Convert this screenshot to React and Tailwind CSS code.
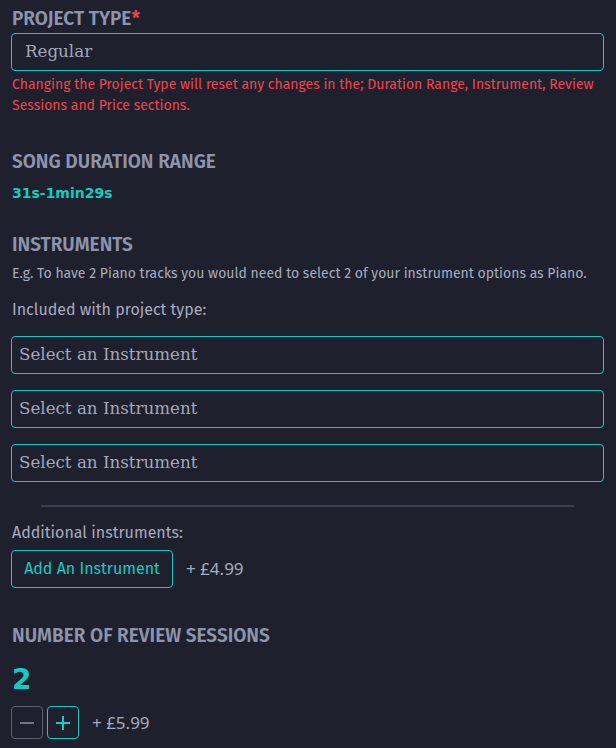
import React from "react";

const sans = "font-['Fira_Sans','Noto_Sans',sans-serif]";
const slab = "font-['DejaVu_Serif','Liberation_Serif',serif]";
const wide = "font-['DejaVu_Sans','Verdana',sans-serif]";
const price = "font-['Noto_Sans',sans-serif]";

function Heading({ children }) {
  return (
    <h2 className={`${sans} text-[19px] font-semibold uppercase leading-[24px] text-[#8e94ac]`}>
      {children}
    </h2>
  );
}

function SelectBox({ label, pad = "pl-[13px]" }) {
  return (
    <div className={`h-[38px] w-full rounded-[4px] border border-[#10c9c9] flex items-center ${pad}`}>
      <span className={`${slab} text-[16.7px] text-[#a2a7bb]`}>{label}</span>
    </div>
  );
}

export default function App() {
  return (
    <div className={`min-h-[748px] w-[616px] bg-[#1e212d] pl-[11px] pr-[12px] pt-[7px] ${sans}`}>
      <div className="pl-[1px]">
        <Heading>
          Project Type<span className="text-[#f0444c]">*</span>
        </Heading>
      </div>
      <div className="mt-[2px]">
        <SelectBox label="Regular" />
      </div>
      <p className="mt-[3px] pl-[1px] text-[14px] leading-[21px] text-[#f0444c]">
        Changing the Project Type will reset any changes in the; Duration Range, Instrument, Review Sessions and Price sections.
      </p>

      <div className="mt-[34px] pl-[1px]">
        <Heading>Song Duration Range</Heading>
      </div>
      <div className={`mt-[10px] pl-[1px] ${wide} text-[14px] font-semibold leading-[18px] text-[#12cbc6]`}>31s-1min29s</div>

      <div className="mt-[31px] pl-[1px]">
        <Heading>Instruments</Heading>
      </div>
      <p className="mt-[8px] pl-[1px] text-[14px] leading-[18px] text-[#a7abbd]">
        E.g. To have 2 Piano tracks you would need to select 2 of your instrument options as Piano.
      </p>
      <p className="mt-[17px] pl-[1px] text-[16px] leading-[20px] text-[#a7abbd]">Included with project type:</p>

      <div className="mt-[16px] flex flex-col gap-[16px]">
        <SelectBox label="Select an Instrument" pad="pl-[7px]" />
        <SelectBox label="Select an Instrument" pad="pl-[7px]" />
        <SelectBox label="Select an Instrument" pad="pl-[7px]" />
      </div>

      <div className="mt-[23px] ml-[30px] mr-[30px] h-[2px] bg-[#3b3f4e]" />

      <p className="mt-[16px] pl-[1px] text-[16px] leading-[20px] text-[#a7abbd]">Additional instruments:</p>
      <div className="mt-[7px] flex items-center gap-[13px]">
        <button className="h-[38px] w-[162px] rounded-[4px] border border-[#10c9c9] text-[16px] text-[#12cbc6]">
          Add An Instrument
        </button>
        <span className={`${price} text-[17px] text-[#a7abbd]`}>+ £4.99</span>
      </div>

      <div className="mt-[36px] pl-[1px]">
        <Heading>Number of Review Sessions</Heading>
      </div>
      <div className={`mt-[16px] pl-[1px] ${wide} text-[28px] font-bold leading-[32px] text-[#12cbc6]`}>2</div>
      <div className="mt-[10px] flex items-center gap-[4px]">
        <button className="flex h-[33px] w-[32px] items-center justify-center rounded-[4px] border border-[#5b5f6e]">
          <svg width="14" height="14" viewBox="0 0 14 14">
            <path d="M0 7h14" stroke="#6f7384" strokeWidth="2" />
          </svg>
        </button>
        <button className="flex h-[33px] w-[32px] items-center justify-center rounded-[4px] border border-[#10c9c9]">
          <svg width="14" height="14" viewBox="0 0 14 14">
            <path d="M0 7h14M7 0v14" stroke="#12cbc6" strokeWidth="2" />
          </svg>
        </button>
        <span className={`ml-[9px] ${price} text-[17px] text-[#a7abbd]`}>+ £5.99</span>
      </div>
    </div>
  );
}
